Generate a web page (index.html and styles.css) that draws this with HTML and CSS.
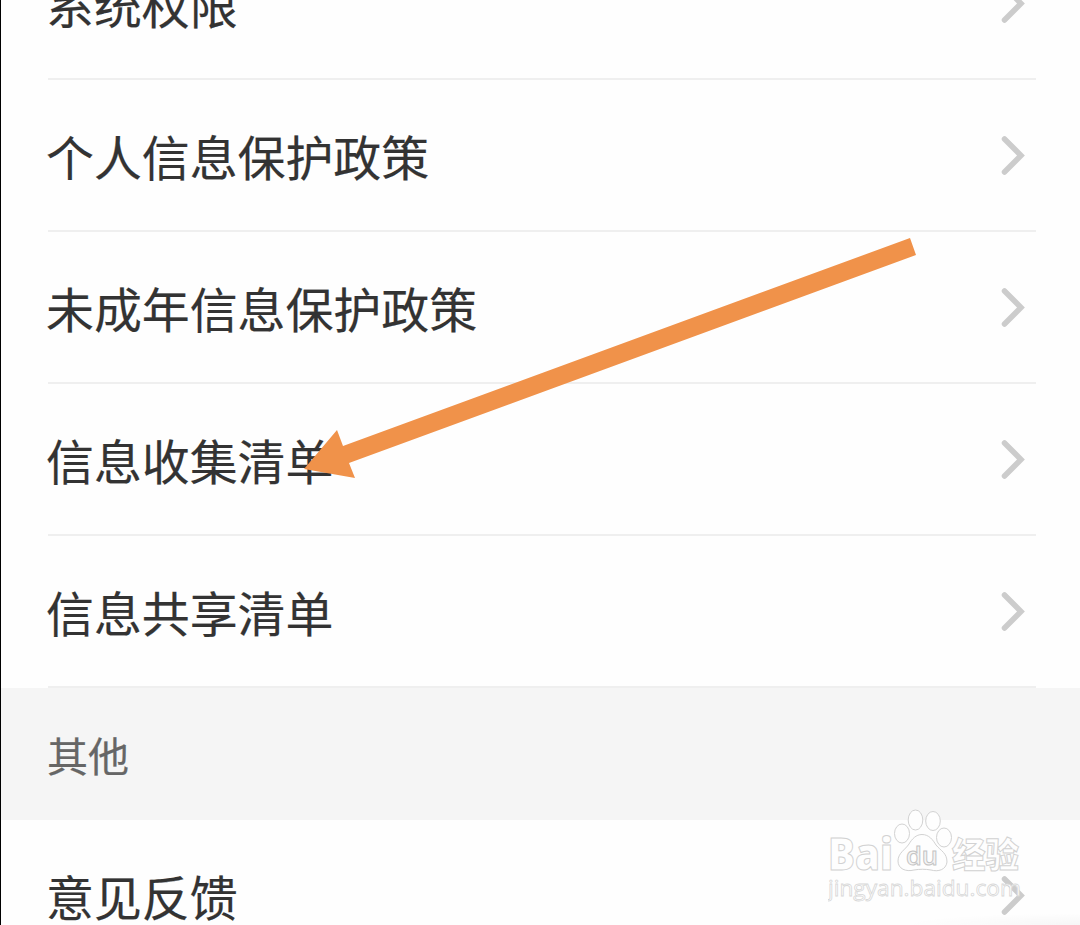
FILE: index.html
```html
<!DOCTYPE html>
<html lang="zh-CN">
<head>
    <meta charset="UTF-8">
    <meta name="viewport" content="width=device-width, initial-scale=1.0">
    <title>设置</title>
    <link rel="stylesheet" href="styles.css">
</head>
<body>
    <main class="screen">
        <ul class="list list-top">
            <li class="row"><span>系统权限</span><svg class="chevron" viewBox="0 0 24 40"><path d="M3.5 4L20 20.500L3.5 37"/></svg></li>
            <li class="row"><span>个人信息保护政策</span><svg class="chevron" viewBox="0 0 24 40"><path d="M3.5 4L20 20.500L3.5 37"/></svg></li>
            <li class="row"><span>未成年信息保护政策</span><svg class="chevron" viewBox="0 0 24 40"><path d="M3.5 4L20 20.500L3.5 37"/></svg></li>
            <li class="row"><span>信息收集清单</span><svg class="chevron" viewBox="0 0 24 40"><path d="M3.5 4L20 20.500L3.5 37"/></svg></li>
            <li class="row"><span>信息共享清单</span><svg class="chevron" viewBox="0 0 24 40"><path d="M3.5 4L20 20.500L3.5 37"/></svg></li>
        </ul>
        <h2 class="section-title">其他</h2>
        <ul class="list">
            <li class="row"><span>意见反馈</span><svg class="chevron" viewBox="0 0 24 40"><path d="M3.5 4L20 20.500L3.5 37"/></svg></li>
        </ul>

        <!-- Arrow pointing at 信息收集清单 -->
        <svg class="arrow" viewBox="0 0 612 242">
            <path d="M606 0L612 17L45 225L51 240L0 231L33 192L39 208Z"/>
        </svg>

        <!-- Watermark -->
        <svg class="watermark" viewBox="0 0 200 100">
            <g class="mark">
                <text class="latin" x="0" y="62" font-size="44" textLength="65" lengthAdjust="spacingAndGlyphs">Bai</text>
                <text class="cjk" x="124" y="60" font-size="35" textLength="67" lengthAdjust="spacingAndGlyphs">经验</text>
                <ellipse cx="74" cy="25.500" rx="7.500" ry="9.500"/>
                <ellipse cx="87.500" cy="12" rx="7.300" ry="10"/>
                <ellipse cx="105" cy="13" rx="7.300" ry="9.500"/>
                <ellipse cx="116" cy="29.500" rx="7.500" ry="9.500"/>
                <path d="M94 26.500C101 26.500 105 32 108 37C113 43 119 45 119 54C118 62 110 64 103 62C97 61 92 61 86 62C78 64 70 61 70 53C70 45 77 42 81 36C84 31 88 26.500 94 26.500Z"/>
                <text class="du" x="78" y="57" font-size="26" textLength="32" lengthAdjust="spacingAndGlyphs">du</text>
            </g>
            <text class="url" x="0" y="88" font-size="22" textLength="193" lengthAdjust="spacingAndGlyphs">jingyan.baidu.com</text>
        </svg>
        <div class="bottom-shade"></div>
    </main>
</body>
</html>
```

FILE: styles.css
```css
* {
    box-sizing: border-box;
}
body {
    margin: 0;
    font-family: "Noto Sans CJK SC", sans-serif;
    background-color: #fefefe;
    color: #333;
    overflow: hidden;
}
.screen {
    position: relative;
    height: 925px;
    overflow: hidden;
    border-left: 1px solid #000;
}
.list {
    list-style: none;
    margin: 0;
    padding: 0 44px 0 47px;
}
.list-top {
    margin-top: -72px;
}
.row {
    display: flex;
    justify-content: space-between;
    align-items: center;
    height: 152px;
    padding-right: 11px;
    border-bottom: 2px solid #efefef;
    font-size: 47.9px;
    line-height: 72px;
}
.row span {
    margin-left: -2px;
    padding-bottom: 1px;
    -webkit-text-stroke: 0.2px #333;
}
.chevron {
    width: 24px;
    height: 40px;
    fill: none;
    stroke: #ccc;
    stroke-width: 5.5;
    stroke-linecap: round;
}
.section-title {
    display: flex;
    align-items: center;
    height: 132px;
    margin: 0;
    padding: 0 0 1px 46px;
    background-color: #f5f5f5;
    color: #666;
    font-size: 41px;
    font-weight: 400;
    -webkit-text-stroke: 0.2px #666;
}
.arrow {
    position: absolute;
    left: 303px;
    top: 238px;
    width: 612px;
    height: 242px;
    fill: #f0924a;
}
.watermark {
    position: absolute;
    left: 827px;
    top: 808px;
    width: 200px;
    height: 100px;
    fill: #fefefe;
    stroke: #d2d2d2;
    stroke-width: 1;
}
.latin {
    font-family: "Open Sans", sans-serif;
    font-weight: 800;
}
.cjk {
    font-weight: 900;
}
.du {
    font-family: "Open Sans", sans-serif;
    font-weight: 600;
    fill: #f5f5f5;
    stroke: #c4c4c4;
}
.url {
    font-family: "Open Sans", sans-serif;
    fill: #fff;
    stroke: #d8d8d8;
    stroke-width: 0.8;
}
.bottom-shade {
    position: absolute;
    right: 0;
    bottom: 0;
    width: 180px;
    height: 12px;
    background: radial-gradient(ellipse at bottom right, rgba(0, 0, 0, 0.03), rgba(0, 0, 0, 0) 70%);
}
```
